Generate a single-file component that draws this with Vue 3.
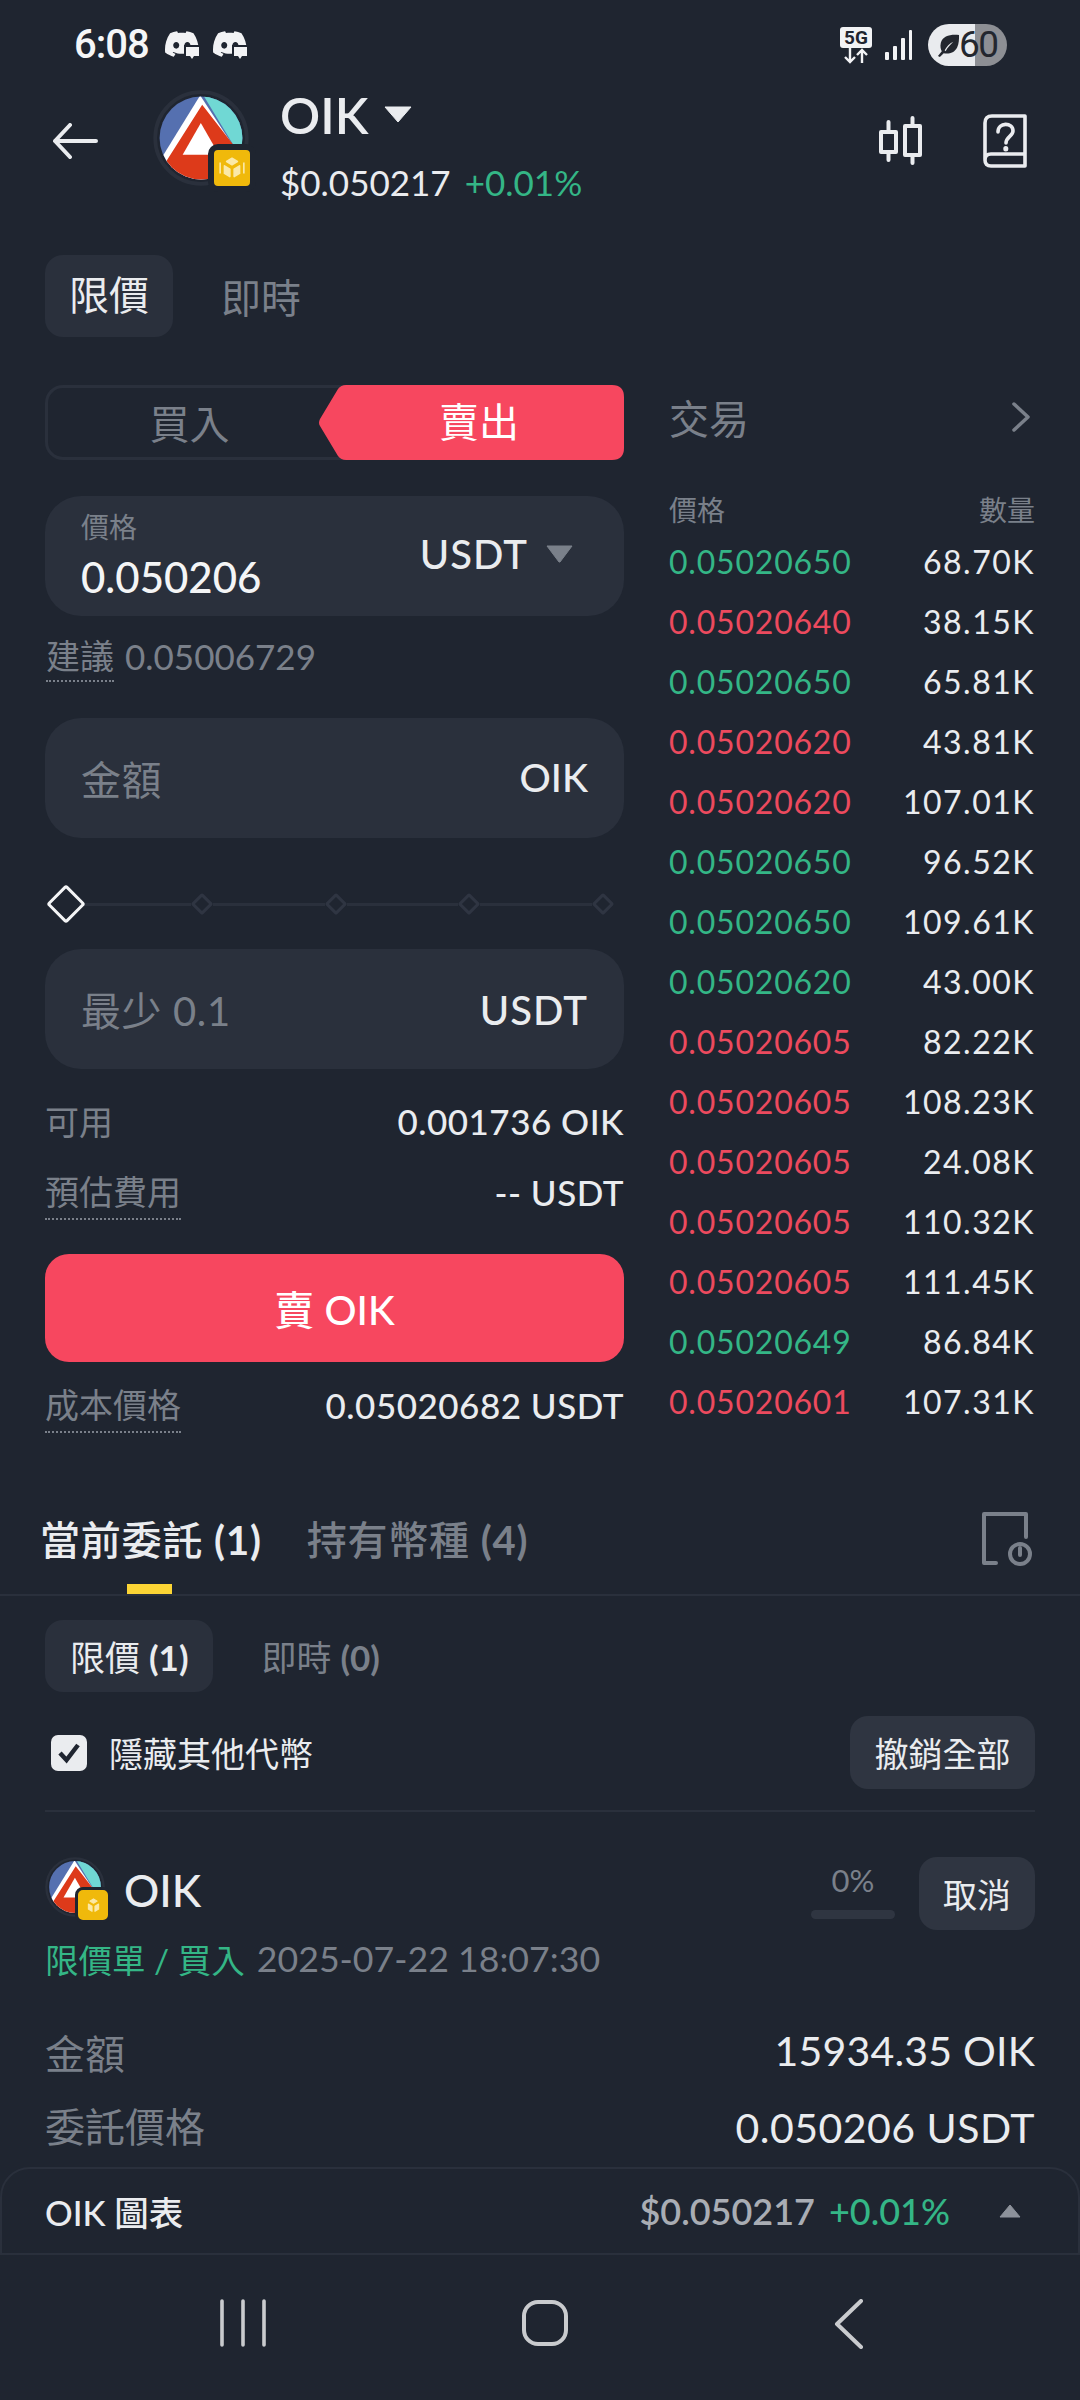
<script setup>
const trades = [
  ['g', '0.05020650', '68.70K'],
  ['r', '0.05020640', '38.15K'],
  ['g', '0.05020650', '65.81K'],
  ['r', '0.05020620', '43.81K'],
  ['r', '0.05020620', '107.01K'],
  ['g', '0.05020650', '96.52K'],
  ['g', '0.05020650', '109.61K'],
  ['g', '0.05020620', '43.00K'],
  ['r', '0.05020605', '82.22K'],
  ['r', '0.05020605', '108.23K'],
  ['r', '0.05020605', '24.08K'],
  ['r', '0.05020605', '110.32K'],
  ['r', '0.05020605', '111.45K'],
  ['g', '0.05020649', '86.84K'],
  ['r', '0.05020601', '107.31K']
]
const discord = 'M20.317 4.3698a19.7913 19.7913 0 00-4.8851-1.5152.0741.0741 0 00-.0785.0371c-.211.3753-.4447.8648-.6083 1.2495-1.8447-.2762-3.68-.2762-5.4868 0-.1636-.3933-.4058-.8742-.6177-1.2495a.077.077 0 00-.0785-.037 19.7363 19.7363 0 00-4.8852 1.515.0699.0699 0 00-.0321.0277C.5334 9.0458-.319 13.5799.0992 18.0578a.0824.0824 0 00.0312.0561c2.0528 1.5076 4.0413 2.4228 5.9929 3.0294a.0777.0777 0 00.0842-.0276c.4616-.6304.8731-1.2952 1.226-1.9942a.076.076 0 00-.0416-.1057c-.6528-.2476-1.2743-.5495-1.8722-.8923a.077.077 0 01-.0076-.1277c.1258-.0943.2517-.1923.3718-.2914a.0743.0743 0 01.0776-.0105c3.9278 1.7933 8.18 1.7933 12.0614 0a.0739.0739 0 01.0785.0095c.1202.099.246.1981.3728.2924a.077.077 0 01-.0066.1276 12.2986 12.2986 0 01-1.873.8914.0766.0766 0 00-.0407.1067c.3604.698.7719 1.3628 1.225 1.9932a.076.076 0 00.0842.0286c1.961-.6067 3.9495-1.5219 6.0023-3.0294a.077.077 0 00.0313-.0552c.5004-5.177-.8382-9.6739-3.5485-13.6604a.061.061 0 00-.0312-.0286zM8.02 15.3312c-1.1825 0-2.1569-1.0857-2.1569-2.419 0-1.3332.9555-2.4189 2.157-2.4189 1.2108 0 2.1757 1.0952 2.1568 2.419 0 1.3332-.9555 2.4189-2.1569 2.4189zm7.9748 0c-1.1825 0-2.1569-1.0857-2.1569-2.419 0-1.3332.9554-2.4189 2.1569-2.4189 1.2108 0 2.1757 1.0952 2.1568 2.419 0 1.3332-.946 2.4189-2.1568 2.4189Z'
const dots = [0, 1, 2, 3]
</script>

<template>
  <div class="page">
    <div class="main">
      <div class="status">
        <div class="status-left">
          <span class="time">6:08</span>
          <svg v-for="n in 2" :key="n" class="dc" viewBox="0 0 34 30">
            <path :d="discord" transform="scale(1.4) translate(0 -2)" fill="#f2f3f5" />
            <rect x="19" y="15" width="16" height="15" fill="#1f2530" />
            <path d="M21 17h13v9h-5l-2 3-2-3h-4z" fill="#f2f3f5" />
          </svg>
        </div>
        <div class="status-right">
          <div class="net">
            <span class="five">5G</span>
            <svg width="32" height="16" viewBox="0 0 32 16" fill="none" stroke="#f2f3f5" stroke-width="2.4">
              <path d="M10 0v14M5 9l5 5 5-5M22 15V2M17 7l5-5 5 5" />
            </svg>
          </div>
          <svg class="signal" width="28" height="30" viewBox="0 0 28 30" fill="#f2f3f5">
            <rect x="0" y="22" width="4" height="8" rx="1" />
            <rect x="8" y="16" width="4" height="14" rx="1" />
            <rect x="16" y="8" width="4" height="22" rx="1" />
            <rect x="24" y="0" width="3" height="30" rx="1" />
          </svg>
          <div class="battery">
            <svg width="23" height="25" viewBox="0 0 24 26" fill="#23272f">
              <path d="M23 2C14 1 6 3 4 10c-1 4 0 7 1 9L1 24l2 1 4-4c5 1 11 0 14-6 2-4 2-9 2-13zM8 18c2-4 5-7 9-9-3 3-6 6-8 10z" />
            </svg>
            <span>60</span>
          </div>
        </div>
      </div>

      <div class="header">
        <svg class="back" width="46" height="36" viewBox="0 0 46 36" fill="none" stroke="#eaecef" stroke-width="4" stroke-linecap="round" stroke-linejoin="round">
          <path d="M44 18H3M18 2 3 18l15 16" />
        </svg>
        <div class="logo">
          <svg width="96" height="96" viewBox="0 0 285 285">
            <defs>
              <clipPath id="oik-clip"><circle cx="142.5" cy="142.5" r="123" /></clipPath>
            </defs>
            <g id="oik-mark">
              <circle cx="142.5" cy="142.5" r="136" fill="none" stroke="#2a303c" stroke-width="11" />
              <g clip-path="url(#oik-clip)">
                <rect width="285" height="285" fill="#5570b0" />
                <path d="M140 0H285V240Z" fill="#70d8d4" />
                <path d="M140 16 18 214V285H270V215Z" fill="#fff" />
                <path d="M146 44 30 226V285H285V190L244 170Z" fill="#dd3a1a" />
                <path d="M142 98 88 192H196Z" fill="#fff" />
              </g>
            </g>
          </svg>
          <span class="badge">
            <svg width="28" height="28" viewBox="0 0 26 26" fill="#fbe9a8" stroke="#fbe9a8" stroke-width="1.500" stroke-linejoin="round">
              <path d="M8 7l5-3 5 3-5 3z" />
              <path d="M6 11l5 3v7l-5-3zM20 11l-5 3v7l5-3z" />
              <path d="M2 8v10M24 8v10" fill="none" />
            </svg>
          </span>
        </div>
        <div class="info">
          <div class="title-row">
            <span class="title">OIK</span>
            <svg width="28" height="17" viewBox="0 0 28 17" fill="#eaecef"><path d="M1 1h26L14 16z" stroke="#eaecef" stroke-linejoin="round" /></svg>
          </div>
          <div class="price-row">
            <span>$0.050217</span>
            <span class="green">+0.01%</span>
          </div>
        </div>
        <div class="head-icons">
          <svg width="46" height="50" viewBox="0 0 46 50" fill="none" stroke="#eaecef" stroke-width="4" stroke-linecap="round" stroke-linejoin="round">
            <path d="M3 16h15v20H3zM10.500 6v10M10.500 36v8M27 10h15v29H27zM34.500 2v8M34.500 39v8" />
          </svg>
          <svg class="book" width="44" height="54" viewBox="0 0 44 54" fill="none" stroke="#eaecef" stroke-width="3.600" stroke-linecap="round" stroke-linejoin="round">
            <path d="M2 45V9q0-7 7-7h33v50H8q-6 0-6-6t6-6h34" />
            <path d="M15 18c0-10 15-10 15-1 0 5-7 6-7 12" />
            <path d="M22.800 34.500v.5" stroke-width="5" />
          </svg>
        </div>
      </div>

      <div class="type-tabs">
        <span class="chip">限價</span>
        <span class="chip-off">即時</span>
      </div>

      <div class="trade">
        <div class="left">
          <div class="toggle">
            <div class="buy">買入</div>
            <div class="sell">
              <svg class="sell-bg" width="305" height="75" viewBox="0 0 305 75">
                <path d="M27 0H293q12 0 12 12V63q0 12-12 12H27q-5 0-8-4L1 41q-2-3 0-7L19 4q3-4 8-4Z" fill="#f7475f" />
              </svg>
              <span class="sell-text">賣出</span>
            </div>
          </div>

          <div class="box price-box">
            <div class="price-col">
              <span class="lab">價格</span>
              <span class="val">0.050206</span>
            </div>
            <div class="unit-wrap">
              <span class="unit wide">USDT</span>
              <svg width="27" height="18" viewBox="0 0 27 18" fill="#7a808a"><path d="M1 1h25L14 17h-1z" stroke="#7a808a" stroke-linejoin="round" /></svg>
            </div>
          </div>

          <div class="suggest">
            <span class="dotted sug-lab">建議</span>
            <span class="sug-val">0.05006729</span>
          </div>

          <div class="box amount-box">
            <span class="ph">金額</span>
            <span class="unit narrow">OIK</span>
          </div>

          <div class="slider">
            <span class="big-d"></span>
            <template v-for="d in dots" :key="d">
              <span class="line"></span>
              <span class="small-d"></span>
            </template>
          </div>

          <div class="box min-box">
            <span class="ph">最少 0.1</span>
            <span class="unit wide">USDT</span>
          </div>

          <div class="kv first-kv">
            <span class="k">可用</span>
            <span class="v">0.001736 OIK</span>
          </div>
          <div class="kv fee-kv">
            <span class="k dotted">預估費用</span>
            <span class="v">-- USDT</span>
          </div>
          <button class="sell-btn">賣 OIK</button>
          <div class="kv cost-kv">
            <span class="k dotted">成本價格</span>
            <span class="v">0.05020682 USDT</span>
          </div>
        </div>

        <div class="right">
          <div class="tr-head">
            <span>交易</span>
            <svg width="18" height="30" viewBox="0 0 18 30" fill="none" stroke="#7a808a" stroke-width="3.500" stroke-linecap="round" stroke-linejoin="round">
              <path d="M2 2l14 13L2 28" />
            </svg>
          </div>
          <div class="tr-cols">
            <span>價格</span>
            <span>數量</span>
          </div>
          <div class="tr-rows">
            <div v-for="(t, i) in trades" :key="i" class="tr-row">
              <span :class="t[0] === 'g' ? 'green' : 'red'">{{ t[1] }}</span>
              <span class="qty">{{ t[2] }}</span>
            </div>
          </div>
        </div>
      </div>

      <div class="o-tabs">
        <div class="o-tab on">當前委託 <span class="count">(1)</span><i class="ind"></i></div>
        <div class="o-tab">持有幣種 <span class="count">(4)</span></div>
        <svg class="hist" width="50" height="54" viewBox="0 0 50 54" fill="none" stroke="#7a808a" stroke-width="4" stroke-linecap="round" stroke-linejoin="round">
          <path d="M14 51H2V2h42v23" />
          <circle cx="38" cy="42" r="10" />
          <path d="M38 36v7h0" />
        </svg>
      </div>

      <div class="sub-tabs">
        <span class="sub on">限價 <span class="count">(1)</span></span>
        <span class="sub">即時 <span class="count">(0)</span></span>
      </div>

      <div class="check-row">
        <div class="check-left">
          <svg width="36" height="36" viewBox="0 0 36 36">
            <rect width="36" height="36" rx="7" fill="#eaecef" />
            <path d="M9 18l6.500 7L27 10" fill="none" stroke="#1f2530" stroke-width="4.500" />
          </svg>
          <span>隱藏其他代幣</span>
        </div>
        <button class="ghost cancel-all">撤銷全部</button>
      </div>
      <div class="rule"></div>

      <div class="order-head">
        <div class="order-name">
          <div class="logo-sm">
            <svg width="60" height="60" viewBox="0 0 285 285"><use href="#oik-mark" /></svg>
            <span class="badge-sm">
              <svg width="19" height="19" viewBox="0 0 26 26" fill="#fbe9a8" stroke="#fbe9a8" stroke-width="1.500" stroke-linejoin="round">
                <path d="M8 7l5-3 5 3-5 3z" />
                <path d="M6 11l5 3v7l-5-3zM20 11l-5 3v7l5-3z" />
              </svg>
            </span>
          </div>
          <span class="order-sym">OIK</span>
        </div>
        <div class="order-right">
          <div class="progress">
            <span>0%</span>
            <i></i>
          </div>
          <button class="ghost cancel">取消</button>
        </div>
      </div>
      <div class="order-sub">
        <span class="green">限價單 / 買入</span>
        <span class="date">2025-07-22 18:07:30</span>
      </div>
      <div class="detail d1"><span>金額</span><b>15934.35 OIK</b></div>
      <div class="detail d2"><span>委託價格</span><b>0.050206 USDT</b></div>
    </div>

    <div class="sheet">
      <span class="sheet-title">OIK 圖表</span>
      <div class="sheet-right">
        <span class="sheet-price">$0.050217</span>
        <span class="green sheet-change">+0.01%</span>
        <svg width="22" height="14" viewBox="0 0 22 14" fill="#8d929b"><path d="M11 1l10 12H1z" stroke="#8d929b" stroke-linejoin="round" /></svg>
      </div>
    </div>

    <div class="nav">
      <svg width="46" height="48" viewBox="0 0 46 48" fill="none" stroke="#c9cbce" stroke-width="3.600" stroke-linecap="round">
        <path d="M2 2v44M23 2v44M44 2v44" />
      </svg>
      <svg class="home" width="48" height="48" viewBox="0 0 48 48" fill="none" stroke="#c9cbce" stroke-width="4">
        <rect x="3" y="3" width="42" height="42" rx="14" />
      </svg>
      <svg width="30" height="50" viewBox="0 0 30 50" fill="none" stroke="#c9cbce" stroke-width="4" stroke-linecap="round" stroke-linejoin="round">
        <path d="M27 2 3 25l24 23" />
      </svg>
    </div>
  </div>
</template>

<style scoped>
.page {
  width: 1080px;
  height: 2400px;
  background: #1f2530;
  color: #eaecef;
  font-family: Lato, "Noto Sans CJK TC", sans-serif;
  display: flex;
  flex-direction: column;
  overflow: hidden;
}
.main { flex: 1; min-height: 0; overflow: hidden; }
.green { color: #34b686; }
.red { color: #ec4a5e; }
.count { font-weight: 700; }

.status { height: 90px; padding: 0 73px 0 74px; display: flex; justify-content: space-between; align-items: center; }
.status-left { display: flex; align-items: center; gap: 14px; }
.time { font-family: Roboto, sans-serif; font-size: 40px; font-weight: 500; letter-spacing: -1px; margin-right: 2px; color: #f5f6f7; line-height: 40px; }
.dc { width: 34px; height: 30px; }
.status-right { display: flex; align-items: center; }
.net { display: flex; flex-direction: column; align-items: center; width: 32px; }
.five { width: 32px; height: 21px; background: #f2f3f5; color: #1f2530; border-radius: 3px; font: 700 19px/21px Roboto, sans-serif; text-align: center; }
.signal { margin-left: 13px; }
.battery {
  width: 79px; height: 42px; margin-left: 15px; border-radius: 21px;
  background: linear-gradient(90deg, #e9ebee 0 47px, #8d8f94 47px 100%);
  display: flex; align-items: center; justify-content: flex-start; padding-left: 9px;
  box-sizing: border-box; color: #23272f; font: 400 37px/42px Roboto, sans-serif;
}
.battery span { letter-spacing: -1.5px; margin-left: -1px; }

.header { height: 112px; display: flex; align-items: flex-start; position: relative; }
.back { margin: 33px 0 0 52px; }
.logo { position: relative; width: 96px; height: 96px; margin-left: 55px; }
.badge {
  position: absolute; left: 55px; top: 54px; width: 36px; height: 36px;
  background: #f0b90b; border-radius: 10px; border: 6px solid #1f2530;
  display: flex; align-items: center; justify-content: center;
}
.info { margin-left: 31px; display: flex; flex-direction: column; }
.title-row { display: flex; align-items: center; gap: 16px; height: 50px; }
.title { font-size: 50px; font-weight: 600; line-height: 50px; }
.title-row svg { margin-top: -2px; }
.price-row { margin-top: 22px; height: 40px; display: flex; gap: 14px; font-size: 35px; line-height: 40px; }
.head-icons { margin-left: auto; display: flex; align-items: center; gap: 59px; padding: 24px 53px 0 0; }

.type-tabs { margin: 53px 0 0 45px; display: flex; align-items: center; gap: 48px; font-size: 40px; }
.chip { width: 128px; height: 82px; line-height: 80px; text-align: center; background: #2a303c; border-radius: 18px; }
.chip-off { color: #7a808a; }

.trade { margin-top: 48px; padding: 0 45px; display: flex; gap: 45px; }
.left { width: 579px; flex: none; }
.right { width: 366px; flex: none; }

.toggle { display: flex; height: 75px; }
.buy {
  flex: 1; border: 3px solid #2a303c; border-right: none; border-radius: 18px 0 0 18px;
  box-sizing: border-box; text-align: center; font-size: 40px; line-height: 72px; color: #7a808a; padding-right: 14px;
}
.sell { width: 305px; margin-left: -26px; position: relative; text-align: center; font-size: 40px; line-height: 75px; color: #fff; padding-left: 15px; box-sizing: border-box; }
.sell-bg { position: absolute; left: 0; top: 0; }
.sell-text { position: relative; }

.box { background: #2a303c; border-radius: 36px; height: 120px; padding: 0 36px; box-sizing: border-box; display: flex; align-items: center; justify-content: space-between; }
.price-box { margin-top: 36px; padding-right: 51px; }
.price-col { display: flex; flex-direction: column; margin-top: -2px; }
.lab { font-size: 28px; line-height: 34px; color: #7a808a; }
.val { font-size: 42px; font-weight: 500; line-height: 46px; margin-top: 10px; color: #f4f5f6; }
.unit-wrap { display: flex; align-items: center; gap: 18px; margin-top: -4px; }
.unit { font-size: 40px; font-weight: 500; line-height: 46px; margin-top: -2px; }
.unit.narrow { font-size: 39px; }
.unit.wide { letter-spacing: 1px; margin-top: 1px; }
.unit-wrap .unit.wide { margin-top: 0; }
.ph { font-size: 40px; color: #7a808a; letter-spacing: .6px; }

.suggest { height: 48px; margin-top: 18px; display: flex; align-items: flex-start; gap: 11px; font-size: 34px; color: #7a808a; line-height: 44px; }
.dotted { border-bottom: 2px dotted #7a808a; }
.sug-lab { height: 46px; margin-left: 1px; }
.sug-val { font-size: 35px; }

.amount-box { margin-top: 36px; }
.slider { margin-top: 47px; height: 38px; display: flex; align-items: center; padding: 0 10px 0 2px; }
.big-d { width: 28px; height: 28px; border: 3px solid #f4f5f6; transform: rotate(45deg); border-radius: 3px; margin: 0 5px; flex: none; box-sizing: border-box; }
.small-d { width: 16px; height: 16px; border: 3px solid #2f3542; transform: rotate(45deg); border-radius: 2px; flex: none; box-sizing: border-box; margin: 0 3px; }
.line { flex: 1; height: 3px; background: #2a303c; }
.big-d + .line { margin-left: -6px; }
.min-box { margin-top: 26px; }

.kv { display: flex; justify-content: space-between; align-items: center; }
.k { font-size: 34px; color: #7a808a; line-height: 48px; }
.k.dotted { line-height: 43px; padding-bottom: 5px; }
.v { font-size: 35px; font-weight: 500; letter-spacing: .5px; margin-top: -2px; }
.fee-kv .v, .cost-kv .v { margin-top: -7px; }
.first-kv { margin-top: 29px; height: 48px; }
.fee-kv { margin-top: 24px; height: 50px; }
.sell-btn {
  display: block; width: 100%; height: 108px; margin-top: 34px; border: none; border-radius: 24px;
  background: #f7475f; color: #fff; font: 500 40px Lato, "Noto Sans CJK TC", sans-serif;
}
.cost-kv { margin-top: 21px; height: 50px; }

.tr-head { height: 64px; display: flex; justify-content: space-between; align-items: center; font-size: 40px; color: #7a808a; padding-right: 5px; }
.tr-cols { margin-top: 40px; height: 40px; display: flex; justify-content: space-between; align-items: center; font-size: 28px; color: #7a808a; }
.tr-rows { margin-top: 2px; }
.tr-row { height: 60px; display: flex; justify-content: space-between; align-items: center; font-size: 32px; letter-spacing: .8px; }
.qty { color: #eaecef; letter-spacing: 1.5px; }

.o-tabs { margin-top: 66px; height: 97px; box-sizing: border-box; border-bottom: 2px solid #2a303c; padding: 16px 0 0 40px; display: flex; align-items: flex-start; gap: 45px; font-size: 40px; letter-spacing: .8px; color: #7a808a; position: relative; }
.o-tab { line-height: 50px; font-weight: 500; position: relative; }
.o-tab.on { color: #eaecef; }
.ind { position: absolute; left: 87px; top: 69px; width: 45px; height: 10px; background: #fcd535; }
.hist { margin-left: auto; margin-right: 48px; margin-top: -3px; }

.sub-tabs { margin: 24px 0 0 45px; display: flex; gap: 23px; font-size: 35px; color: #7a808a; }
.sub { height: 72px; line-height: 74px; padding: 0 25px; border-radius: 18px; }
.sub.on { background: #2a303c; color: #eaecef; }

.check-row { margin-top: 24px; padding: 0 45px 0 51px; height: 73px; display: flex; justify-content: space-between; align-items: center; font-size: 34px; }
.check-left { display: flex; align-items: center; gap: 22px; }
.ghost { background: #2f3541; color: #eaecef; border: none; border-radius: 18px; height: 73px; font: 400 34px Lato, "Noto Sans CJK TC", sans-serif; }
.cancel-all { width: 185px; }
.rule { height: 2px; background: #2a303c; margin: 21px 45px 0; }

.order-head { margin-top: 45px; padding: 0 45px; height: 73px; display: flex; justify-content: space-between; }
.order-name { display: flex; align-items: flex-start; gap: 19px; }
.logo-sm { position: relative; width: 60px; height: 60px; }
.badge-sm {
  position: absolute; left: 30px; top: 30px; width: 30px; height: 30px; background: #f0b90b;
  border-radius: 8px; border: 3px solid #1f2530; display: flex; align-items: center; justify-content: center;
}
.order-sym { font-size: 44px; font-weight: 500; line-height: 66px; }
.order-right { display: flex; gap: 24px; }
.progress { width: 84px; display: flex; flex-direction: column; align-items: center; font-size: 31px; color: #7a808a; }
.progress span { line-height: 36px; margin-top: 5px; }
.progress i { width: 84px; height: 9px; border-radius: 5px; background: #2f3541; margin-top: 12px; }
.cancel { width: 116px; }

.order-sub { margin-top: 8px; padding: 0 45px; height: 40px; display: flex; align-items: center; gap: 12px; font-size: 33.500px; }
.date { color: #7a808a; font-size: 35.700px; }

.detail { padding: 0 45px; height: 50px; display: flex; justify-content: space-between; align-items: center; font-size: 40px; }
.detail span { color: #7a808a; }
.detail b { font-weight: 400; font-size: 41px; letter-spacing: .5px; }
.d1 { margin-top: 49px; }
.d1 b { margin-top: -3px; letter-spacing: .2px; }
.d2 { margin-top: 25px; }
.d2 span { margin-top: -4px; }
.d2 b { margin-top: 1px; }

.sheet {
  height: 88px; box-sizing: border-box; flex: none; border: 2px solid #2a303c; border-radius: 30px 30px 0 0;
  padding: 0 57px 0 43px; display: flex; justify-content: space-between; align-items: center;
}
.sheet-title { font-size: 34.500px; font-weight: 500; }
.sheet-right { display: flex; align-items: center; font-size: 36px; font-weight: 600; }
.sheet-price { color: #a9adb4; }
.sheet-change { margin-left: 14px; font-weight: 500; }
.sheet-right svg { margin-left: 49px; }

.nav { height: 145px; flex: none; box-sizing: border-box; padding: 44px 216px 0 220px; display: flex; justify-content: space-between; align-items: flex-start; }
.home { margin-left: -10px; }
</style>

<style>
button { padding: 0; }
</style>
